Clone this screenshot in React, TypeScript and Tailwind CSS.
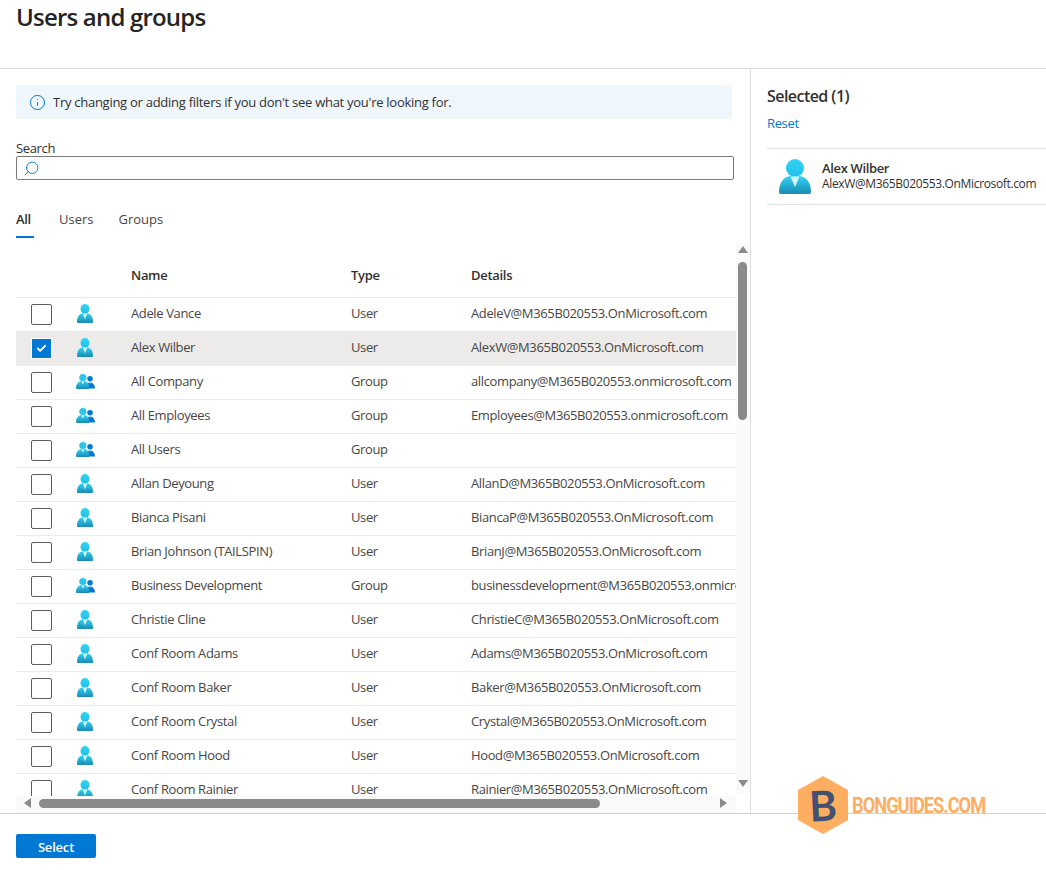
import { Info, Search, Check } from "lucide-react";

type Row = { name: string; type: "User" | "Group"; details: string; checked?: boolean };

const rows: Row[] = [
  { name: "Adele Vance", type: "User", details: "AdeleV@M365B020553.OnMicrosoft.com" },
  { name: "Alex Wilber", type: "User", details: "AlexW@M365B020553.OnMicrosoft.com", checked: true },
  { name: "All Company", type: "Group", details: "allcompany@M365B020553.onmicrosoft.com" },
  { name: "All Employees", type: "Group", details: "Employees@M365B020553.onmicrosoft.com" },
  { name: "All Users", type: "Group", details: "" },
  { name: "Allan Deyoung", type: "User", details: "AllanD@M365B020553.OnMicrosoft.com" },
  { name: "Bianca Pisani", type: "User", details: "BiancaP@M365B020553.OnMicrosoft.com" },
  { name: "Brian Johnson (TAILSPIN)", type: "User", details: "BrianJ@M365B020553.OnMicrosoft.com" },
  { name: "Business Development", type: "Group", details: "businessdevelopment@M365B020553.onmicrosoft.com" },
  { name: "Christie Cline", type: "User", details: "ChristieC@M365B020553.OnMicrosoft.com" },
  { name: "Conf Room Adams", type: "User", details: "Adams@M365B020553.OnMicrosoft.com" },
  { name: "Conf Room Baker", type: "User", details: "Baker@M365B020553.OnMicrosoft.com" },
  { name: "Conf Room Crystal", type: "User", details: "Crystal@M365B020553.OnMicrosoft.com" },
  { name: "Conf Room Hood", type: "User", details: "Hood@M365B020553.OnMicrosoft.com" },
  { name: "Conf Room Rainier", type: "User", details: "Rainier@M365B020553.OnMicrosoft.com" },
];

function UserIcon({ width, height }: { width: number; height: number }) {
  return (
    <svg width={width} height={height} viewBox="0 0 32 35" preserveAspectRatio="none" className="shrink-0">
      <defs>
        <linearGradient id="uHead" x1="0" y1="0" x2="0" y2="1">
          <stop offset="0" stopColor="#32d4f5" />
          <stop offset="1" stopColor="#22bfe6" />
        </linearGradient>
        <linearGradient id="uBody" x1="0" y1="0" x2="0" y2="1">
          <stop offset="0" stopColor="#32d4f5" />
          <stop offset="1" stopColor="#198ab3" />
        </linearGradient>
      </defs>
      <circle cx="16" cy="9" r="9" fill="url(#uHead)" />
      <path d="M0 33C0 24 4 18.500 11 17h10c7 1.500 11 7 11 16 0 1.200-.8 2-2 2H2c-1.200 0-2-.8-2-2z" fill="url(#uBody)" />
      <path d="M11.500 17.500h9L16 28z" fill="#d8f5fb" />
    </svg>
  );
}

function GroupIcon() {
  return (
    <svg width="19" height="15" viewBox="0 0 20 16" preserveAspectRatio="none" className="shrink-0">
      <defs>
        <linearGradient id="gBody" x1="0" y1="0" x2="0" y2="1">
          <stop offset="0" stopColor="#32d4f5" />
          <stop offset="1" stopColor="#198ab3" />
        </linearGradient>
      </defs>
      <circle cx="14.800" cy="5" r="2.900" fill="#0078d4" />
      <path d="M11 15.500c0-3.700 1.500-6.700 3.800-6.700s5.200 3 5.200 6.700z" fill="#0078d4" />
      <path d="M13.900 8.800h1.800l-.9 2z" fill="#b9dcf5" />
      <circle cx="7.200" cy="3.800" r="3.800" fill="#2bc7ea" />
      <path d="M0 15C0 11 2.300 8 5.500 7.500h3.400c3.200.5 5.100 3.500 5.100 7.500 0 .6-.4 1-1 1H1c-.6 0-1-.4-1-1z" fill="url(#gBody)" />
      <path d="M5.500 7.600h3.400L7.200 11.200z" fill="#d8f5fb" />
    </svg>
  );
}

function Checkbox({ checked }: { checked?: boolean }) {
  if (checked) {
    return (
      <div className="w-[21px] h-[21px] shrink-0 bg-[#0078d4] border border-white flex items-center justify-center">
        <Check size={11} strokeWidth={4} className="text-white" />
      </div>
    );
  }
  return <div className="w-[21px] h-[21px] shrink-0 rounded-[2px] border border-[#605e5c] bg-white" />;
}

function Arrow({ dir }: { dir: "up" | "down" | "left" | "right" }) {
  const points = {
    up: "0,8 5,1 10,8",
    down: "0,1 10,1 5,8",
    left: "8,0 8,10 1,5",
    right: "1,0 1,10 8,5",
  }[dir];
  return (
    <svg width="10" height="10" viewBox="0 0 10 10" className="shrink-0">
      <polygon points={points} fill="#8a8a8a" />
    </svg>
  );
}

export default function App() {
  return (
    <div className="relative h-[870px] w-[1046px] overflow-hidden bg-white text-[13px] text-[#323130] font-['Open_Sans','Noto_Sans',sans-serif]">
      <header className="h-[69px] border-b border-[#dfdfdf] pl-4">
        <h1 className="text-[24px] leading-[34px] font-semibold text-[#252423] tracking-[-0.8px]">Users and groups</h1>
      </header>

      <div className="flex h-[744px]">
        <section className="w-[751px] shrink-0 border-r border-[#dfdfdf] flex flex-col">
          <div className="ml-4 mt-4 w-[716px] h-[34px] bg-[#eff6fc] flex items-center gap-[7px] pl-[13px] tracking-[-0.27px]">
            <Info size={17} strokeWidth={1.4} className="text-[#0078d4]" />
            <span className="pt-[1px]">Try changing or adding filters if you don't see what you're looking for.</span>
          </div>

          <label className="ml-4 mt-[21px] block leading-[16px] tracking-[-0.35px]">Search</label>
          <div className="ml-4 w-[718px] h-[24px] border border-[#7a7a7a] rounded-[2px] flex items-center pl-[6px]">
            <Search size={17} strokeWidth={1.3} className="text-[#0078d4] -scale-x-100" />
          </div>

          <nav className="ml-4 mt-[28px] flex gap-[25px] h-[30px] leading-[22px] text-[#484644]">
            <div className="w-[18px] border-b-2 border-[#0078d4] h-[30px] font-semibold text-[#323130] tracking-[-0.4px]">All</div>
            <div>Users</div>
            <div>Groups</div>
          </nav>

          <div className="flex flex-1 min-h-0 mt-[4px]">
            <div className="flex flex-col w-[736px] shrink-0">
              <div className="flex-1 min-h-0 overflow-hidden pl-4">
                <div className="h-[56px] flex items-center border-b border-[#edebe9] font-semibold tracking-[-0.3px] pt-[13px]">
                  <div className="w-[115px]" />
                  <div className="w-[220px]">Name</div>
                  <div className="w-[120px]">Type</div>
                  <div>Details</div>
                </div>
                {rows.map((r) => (
                  <div
                    key={r.name}
                    className={`h-[34px] flex items-center border-b border-[#edebe9] whitespace-nowrap overflow-hidden text-[#484644] tracking-[-0.37px] ${r.checked ? "bg-[#edebe9]" : ""}`}
                  >
                    <div className="w-[60px] pl-[15px] shrink-0"><Checkbox checked={r.checked} /></div>
                    <div className="w-[55px] shrink-0 flex justify-start pb-[3px]">
                      {r.type === "User" ? (
                        <div className="pl-[1px]"><UserIcon width={16} height={19} /></div>
                      ) : (
                        <GroupIcon />
                      )}
                    </div>
                    <div className="w-[220px] shrink-0 pb-[2px]">{r.name}</div>
                    <div className="w-[120px] shrink-0 pb-[2px]">{r.type}</div>
                    <div className="pb-[2px]">{r.details}</div>
                  </div>
                ))}
              </div>
              <div className="h-[17px] pb-[3px] flex items-center bg-[#fafafa] ml-4 shrink-0 pl-[7px] pr-[7px]">
                <Arrow dir="left" />
                <div className="ml-[6px] w-[561px] h-[9px] rounded-full bg-[#8a8a8a]" />
                <div className="flex-1" />
                <Arrow dir="right" />
              </div>
            </div>
            <div className="flex-1 flex flex-col items-center bg-[#fafafa] pt-[3px] pb-[4px] pr-[1px] h-[551px]">
              <Arrow dir="up" />
              <div className="mt-[7px] w-[9px] h-[158px] rounded-full bg-[#8a8a8a]" />
              <div className="flex-1" />
              <Arrow dir="down" />
            </div>
          </div>
        </section>

        <aside className="flex-1 pl-4 min-w-0">
          <h2 className="mt-[16px] text-[16px] leading-[22px] font-semibold tracking-[-0.55px]">Selected (1)</h2>
          <a className="mt-[7px] block leading-[18px] text-[#0078d4] tracking-[-0.35px]">Reset</a>
          <div className="mt-[16px] h-[57px] border-y border-[#e3e3e3] flex items-center pl-[12px] gap-[11px]">
            <UserIcon width={32} height={35} />
            <div className="leading-[16px] whitespace-nowrap tracking-[-0.35px] pb-[1px]">
              <div className="font-semibold">Alex Wilber</div>
              <div className="text-[12px]">AlexW@M365B020553.OnMicrosoft.com</div>
            </div>
          </div>
        </aside>
      </div>

      <footer className="h-[57px] border-t border-[#d2d0ce] pl-4 pt-[20px]">
        <button className="w-[80px] h-[24px] pt-[3px] rounded-[2px] bg-[#0078d4] text-white font-semibold text-[13px] tracking-[-0.2px]">Select</button>
      </footer>

      <div className="absolute left-[797px] top-[776px] flex items-center gap-[3px] opacity-90">
        <div className="relative w-[52px] h-[58px]">
          <svg width="52" height="58" viewBox="0 0 52 58">
            <polygon points="26,0 51,14 51,44 26,58 1,44 1,14" fill="#fda650" />
          </svg>
          <span className="absolute inset-0 flex items-center justify-center text-[42px] font-bold text-[#2f3f63] -rotate-3 font-['Lato',sans-serif]">B</span>
        </div>
        <span className="origin-left scale-x-[.83] text-[22px] font-bold text-[#fda650] tracking-[-1.2px] font-['Roboto',sans-serif]">BONGUIDES.COM</span>
      </div>
    </div>
  );
}
